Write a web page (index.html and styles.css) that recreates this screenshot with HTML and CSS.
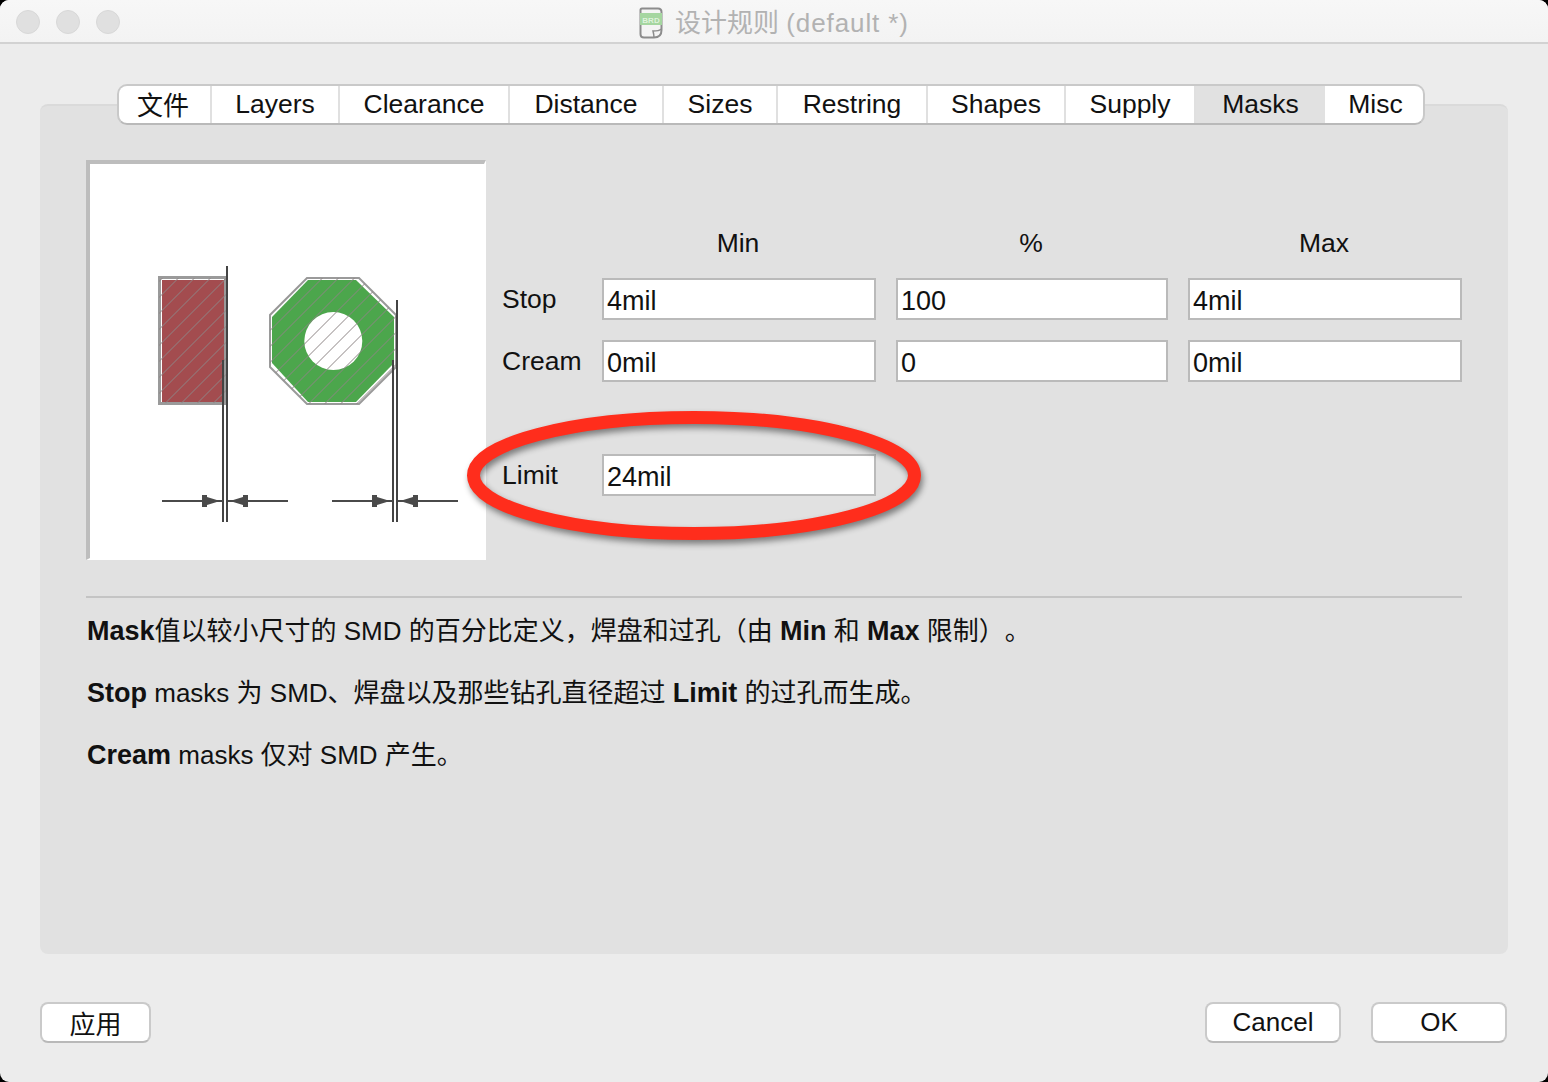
FILE: index.html
```html
<!DOCTYPE html>
<html lang="zh-CN">
<head>
    <meta charset="UTF-8">
    <title>设计规则 (default *)</title>
    <link rel="stylesheet" href="styles.css">
</head>
<body>
    <div class="window">
        <div class="titlebar">
            <div class="lights">
                <span class="light"></span>
                <span class="light"></span>
                <span class="light"></span>
            </div>
            <div class="title">
                <svg class="title-icon" width="24" height="32" viewBox="0 0 24 32">
                    <path d="M3 1.500H19Q22.500 1.500 22.500 5V23Q22.500 30.500 15 30.500H5Q1.500 30.500 1.500 27V3Q1.500 1.500 3 1.500Z" fill="#f4f4f4" stroke="#8c8c8c" stroke-width="2"/>
                    <path d="M22.500 22Q20 24 14 24Q15 28 15 30.500" fill="none" stroke="#8c8c8c" stroke-width="1.500"/>
                    <rect x="1" y="6" width="22" height="12" fill="#a5d6a0"/>
                    <text x="12" y="15.500" class="icon-text">BRD</text>
                </svg>
                <span class="title-text">设计规则 <span class="title-doc">(default *)</span></span>
            </div>
            <div></div>
        </div>

        <div class="content">
            <div class="tabs">
                <div class="tab">文件</div>
                <div class="tab">Layers</div>
                <div class="tab">Clearance</div>
                <div class="tab">Distance</div>
                <div class="tab">Sizes</div>
                <div class="tab">Restring</div>
                <div class="tab">Shapes</div>
                <div class="tab">Supply</div>
                <div class="tab active">Masks</div>
                <div class="tab">Misc</div>
            </div>

            <div class="panel">
                <div class="top-row">
                    <div class="diagram">
                        <svg width="394" height="394" viewBox="4 4 394 394">
                            <defs>
                                <pattern id="hatch" patternUnits="userSpaceOnUse" width="16" height="16" patternTransform="translate(2.500 0)">
                                    <path d="M-2 2L2 -2M0 16L16 0M14 18L18 14" stroke="#8c8484" stroke-width="1.400" shape-rendering="crispEdges"/>
                                </pattern>
                                <g id="dim">
                                    <path d="M76 341H137M142 341H202" stroke="#4a4a4a" stroke-width="2"/>
                                    <polygon points="116,335 121,335 121,337 134,341 121,345 121,347 116,347" fill="#4a4a4a"/>
                                    <polygon points="162,335 157,335 157,337 144,341 157,345 157,347 162,347" fill="#4a4a4a"/>
                                </g>
                            </defs>

                            <rect x="73.500" y="117.500" width="66" height="126" fill="#fff" stroke="#9a9a9a" stroke-width="3"/>
                            <rect x="76" y="120" width="62" height="122" fill="#a34c4f"/>
                            <rect x="73" y="118" width="67" height="125" fill="url(#hatch)"/>

                            <polygon points="221,118 273,118 310,155 310,207 273,244 221,244 184,207 184,155" fill="#fff" stroke="#9a9a9a" stroke-width="2"/>
                            <polygon points="222,120 270,120 308,157 308,203 270,242 222,242 186,203 186,157" fill="#4ca64c"/>
                            <circle cx="247.300" cy="181" r="29" fill="#fff"/>
                            <polygon points="221,118 273,118 310,155 310,207 273,244 221,244 184,207 184,155" fill="url(#hatch)"/>

                            <path d="M141 106V362M137 200V362M311 140V362M307 200V362" stroke="#444" stroke-width="2" fill="none"/>
                            <use href="#dim"/>
                            <use href="#dim" x="170"/>
                        </svg>
                    </div>

                    <div class="form-grid">
                        <div></div>
                        <div class="col-head">Min</div>
                        <div class="col-head">%</div>
                        <div class="col-head">Max</div>

                        <label class="row-label">Stop</label>
                        <input class="field" type="text" value="4mil">
                        <input class="field" type="text" value="100">
                        <input class="field" type="text" value="4mil">

                        <label class="row-label">Cream</label>
                        <input class="field" type="text" value="0mil">
                        <input class="field" type="text" value="0">
                        <input class="field" type="text" value="0mil">

                        <label class="row-label limit-row">Limit</label>
                        <input class="field limit-row" type="text" value="24mil">
                    </div>
                </div>

                <div class="separator"></div>

                <div class="notes">
                    <p><b>Mask</b>值以较小尺寸的 SMD 的百分比定义，焊盘和过孔（由 <b>Min</b> 和 <b>Max</b> 限制）。</p>
                    <p><b>Stop</b> masks 为 SMD、焊盘以及那些钻孔直径超过 <b>Limit</b> 的过孔而生成。</p>
                    <p><b>Cream</b> masks 仅对 SMD 产生。</p>
                </div>
            </div>

            <div class="footer">
                <button class="btn apply">应用</button>
                <div class="footer-right">
                    <button class="btn">Cancel</button>
                    <button class="btn">OK</button>
                </div>
            </div>
        </div>

        <!-- red marker drawn over the Limit row -->
        <svg class="marker" width="500" height="170" viewBox="0 0 500 170">
            <ellipse cx="244" cy="80.500" rx="220.500" ry="58" fill="none" stroke="#ff2d1c" stroke-width="13"/>
        </svg>
    </div>
</body>
</html>
```

FILE: styles.css
```css
* {
    box-sizing: border-box;
}
html, body {
    margin: 0;
    height: 100%;
    background-color: #000;
}
body {
    font-family: "Liberation Sans", "Noto Sans CJK SC", sans-serif;
    font-size: 26px;
    color: #111;
    overflow: hidden;
}
.window {
    position: relative;
    width: 1548px;
    height: 1082px;
    background-color: #ececec;
    border-radius: 9px;
    overflow: hidden;
}

/* title bar */
.titlebar {
    display: grid;
    grid-template-columns: 1fr auto 1fr;
    align-items: center;
    height: 44px;
    padding: 2px 16px 0;
    background: linear-gradient(#f7f7f7, #f3f3f3);
    border-bottom: 2px solid #d2d2d2;
}
.lights {
    display: flex;
    gap: 16px;
}
.light {
    width: 24px;
    height: 24px;
    border-radius: 50%;
    background-color: #e0e0e0;
    border: 1px solid #d8d8d8;
}
.title {
    display: flex;
    align-items: center;
    gap: 12px;
    color: #b2b2b2;
}
.title-icon {
    display: block;
    margin-top: 2px;
}
.title-text {
    margin-top: -3px;
}
.title-doc {
    letter-spacing: 0.900px;
}
.icon-text {
    font-size: 8px;
    font-weight: bold;
    text-anchor: middle;
    fill: #dff2dc;
}

/* content */
.content {
    padding: 40px 40px 0;
}
.tabs {
    position: relative;
    z-index: 1;
    display: grid;
    grid-template-columns: 93px 128px 170px 154px 114px 150px 138px 130px 129px 1fr;
    grid-template-rows: 37px;
    width: 1308px;
    height: 41px;
    margin: 0 0 -21px 77px;
    background-color: #fff;
    border: 2px solid #c9c9c9;
    border-bottom-color: #b9b9b9;
    border-radius: 10px;
    overflow: hidden;
}
.tab {
    display: flex;
    align-items: center;
    justify-content: center;
    font-size: 26.500px;
    white-space: nowrap;
    border-right: 2px solid #e0e0e0;
}
.tab:first-child {
    padding: 0 3px 3px 0;
    font-size: 26px;
}
.tab:last-child,
.tab.active {
    border-right: none;
}
.tab:last-child {
    padding-left: 3px;
}
.tab.active {
    background-color: #e1e1e1;
}
.panel {
    height: 850px;
    padding: 54px 46px 0;
    background-color: #e1e1e1;
    border-top: 2px solid #dadada;
    border-radius: 8px;
}
.top-row {
    display: flex;
    gap: 16px;
}
.diagram {
    width: 400px;
    height: 400px;
    background-color: #fff;
    border-style: solid;
    border-width: 4px 2px 2px 4px;
    border-color: #bdbdbd #fff #fff #bdbdbd;
}
.diagram svg {
    display: block;
}
.form-grid {
    display: grid;
    grid-template-columns: 80px 274px 272px 274px;
    grid-template-rows: 36px 42px 42px 32px 42px;
    gap: 20px;
    align-items: center;
    padding-top: 62px;
}
.col-head {
    padding: 7px 2px 0 0;
    font-size: 26.500px;
    text-align: center;
}
.row-label {
    font-size: 26.500px;
    white-space: nowrap;
}
.limit-row {
    grid-row: 5;
}
.field {
    width: 100%;
    height: 42px;
    padding: 4px 0 0 3px;
    font-family: inherit;
    font-size: 27px;
    color: #111;
    background-color: #fff;
    border: 2px solid #bababa;
    border-radius: 0;
    outline: none;
}
.separator {
    height: 2px;
    margin-top: 36px;
    background-color: #c4c4c4;
}
.notes {
    padding: 15px 0 0 1px;
    text-spacing-trim: space-all;
}
.notes p {
    margin: 0 0 26px;
    line-height: 36px;
}
.notes b {
    font-size: 27px;
}

/* bottom buttons */
.footer {
    display: flex;
    justify-content: space-between;
    margin-top: 48px;
    padding-right: 1px;
}
.footer-right {
    display: flex;
    gap: 30px;
}
.btn {
    width: 136px;
    height: 41px;
    padding: 0;
    font-family: inherit;
    font-size: 26px;
    color: #111;
    background-color: #fff;
    border: 2px solid #cacaca;
    border-bottom-color: #b9b9b9;
    border-radius: 8px;
}
.btn.apply {
    width: 111px;
    padding-bottom: 5px;
}

.marker {
    position: absolute;
    left: 450px;
    top: 395px;
    overflow: visible;
    filter: drop-shadow(2px 4px 3px rgba(0, 0, 0, 0.45));
}
```
